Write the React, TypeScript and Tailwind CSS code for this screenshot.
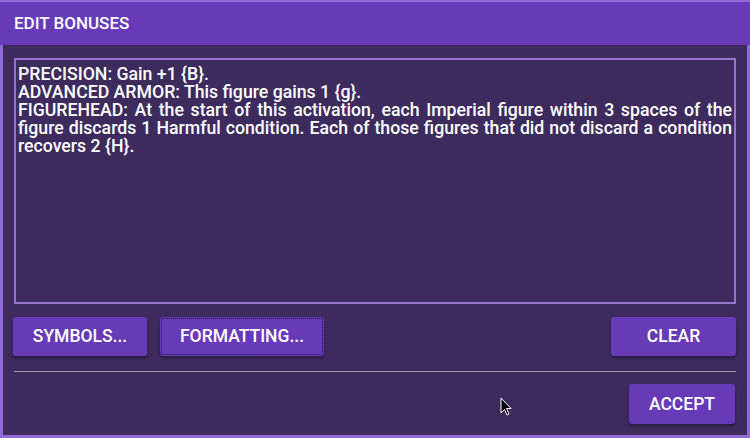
import React from "react";

const text = [
  "PRECISION: Gain +1 {B}.",
  "ADVANCED ARMOR: This figure gains 1 {g}.",
  "FIGUREHEAD: At the start of this activation, each Imperial figure within 3 spaces of the figure discards 1 Harmful condition. Each of those figures that did not discard a condition recovers 2 {H}.",
];

function Btn({ label, focused, className }: { label: string; focused?: boolean; className?: string }) {
  return (
    <button
      className={`relative h-[39px] rounded-[3px] bg-[#673ab7] text-white text-[17.5px] font-medium shadow-[0_2px_3px_rgba(0,0,0,0.35)] ${className ?? ""}`}
    >
      {focused && <span className="absolute inset-[1px] rounded-[2px] border border-dotted border-[#1a1030]" />}
      {label}
    </button>
  );
}

export default function App() {
  return (
    <div
      className="w-[750px] h-[438px] bg-[#8d6ad8] p-[3px] pt-0 flex flex-col relative"
      style={{ fontFamily: "Roboto, 'Liberation Sans', sans-serif" }}
    >
      <div className="h-[45px] bg-[#673ab7] -mx-[3px] border-t-2 border-[#8d6ad8] px-[14px] flex items-center text-white text-[17px] font-medium">
        EDIT BONUSES
      </div>
      <div className="flex-1 bg-[#3d2b5e] flex flex-col px-[11px] pt-[13px]">
        <div className="h-[246px] border-2 border-[#9575cd] px-[2px] py-[5px] text-white text-[17.7px] font-medium leading-[18px] text-justify">
          {text.map((t, i) => (
            <p key={i}>{t}</p>
          ))}
        </div>
        <div className="flex items-center gap-[13px] mt-[13px]">
          <Btn label="SYMBOLS..." className="w-[134px] -ml-px" />
          <Btn label="FORMATTING..." focused className="w-[164px]" />
          <div className="flex-1" />
          <Btn label="CLEAR" className="w-[125px]" />
        </div>
        <div className="h-px bg-[#a395b5] mt-[15px]" />
        <div className="flex justify-end mt-[12px]">
          <Btn label="ACCEPT" className="w-[106px] h-[40px] mr-[1px]" />
        </div>
      </div>
      <svg className="absolute left-[500px] top-[397px]" width="13" height="20" viewBox="0 0 13 20">
        <path d="M1 1 L1 16 L4.5 12.5 L7 18 L9 17 L6.5 11.5 L11 11.5 Z" fill="#000" stroke="#fff" strokeWidth="1" />
      </svg>
    </div>
  );
}
